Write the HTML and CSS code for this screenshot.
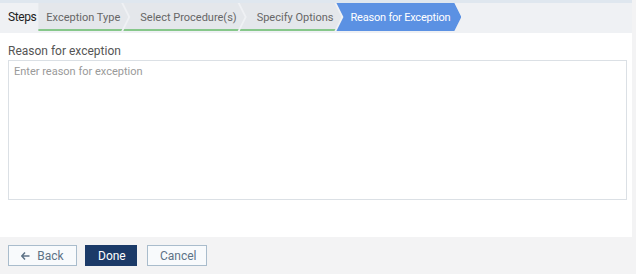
FILE: index.html
```html
<!DOCTYPE html>
<html lang="en">
<head>
  <meta charset="UTF-8">
  <title>Exception Wizard</title>
  <link rel="stylesheet" href="styles.css">
</head>
<body>
  <div class="page">
    <div class="steps">
      <span class="steps-title">Steps</span>
      <div class="step done first">Exception Type</div>
      <div class="step done">Select Procedure(s)</div>
      <div class="step done">Specify Options</div>
      <div class="step active">Reason for Exception</div>
    </div>

    <div class="content">
      <label class="field-label" for="reason">Reason for exception</label>
      <textarea id="reason" class="reason" placeholder="Enter reason for exception"></textarea>
    </div>

    <div class="footer">
      <button class="btn btn-light btn-back">
        <svg class="arrow" width="9" height="8" viewBox="0 0 9 8"><path d="M4 0.5 L0.8 4 L4 7.5 M1 4 H8.5" fill="none" stroke="currentColor" stroke-width="1.5"/></svg>
        Back
      </button>
      <button class="btn btn-primary">Done</button>
      <button class="btn btn-light btn-cancel">Cancel</button>
    </div>
  </div>
</body>
</html>
```

FILE: styles.css
```css
html, body {
  height: 100%;
}
body {
  margin: 0;
  background: #f3f3f4;
  font-family: Roboto, "Liberation Sans", sans-serif;
  color: #333;
}
.page {
  display: flex;
  flex-direction: column;
  height: 100%;
  border-top: 3px solid #dfe7ef;
  box-sizing: border-box;
  margin-right: 4px;
}
.steps {
  display: flex;
  align-items: stretch;
  height: 28px;
  padding-bottom: 2px;
  background: #eff1f4;
}
.steps-title {
  display: flex;
  align-items: center;
  padding: 0 2px 0 8px;
  font-size: 12px;
  color: #222;
  letter-spacing: -0.4px;
}
.step {
  display: flex;
  align-items: center;
  font-size: 11px;
  color: #666;
  background: #e4e7eb;
  padding: 0 8px 0 17px;
  margin-left: -5px;
  box-shadow: inset 0 -2px 0 #86c78a;
  clip-path: polygon(0 0, calc(100% - 7px) 0, 100% 50%, calc(100% - 7px) 100%, 0 100%, 7px 50%);
}
.step.first {
  margin-left: 0;
  padding-left: 8px;
  clip-path: polygon(0 0, calc(100% - 7px) 0, 100% 50%, calc(100% - 7px) 100%, 0 100%);
}
.step.active {
  background: #5b91e3;
  color: #fff;
  box-shadow: none;
  padding-left: 14px;
  padding-right: 11px;
  letter-spacing: -0.2px;
}
.content {
  flex: 1;
  background: #fff;
  padding: 11px 5px 0 8px;
  display: flex;
  flex-direction: column;
}
.field-label {
  font-size: 12px;
  color: #555;
  margin-bottom: 2px;
}
.reason {
  height: 140px;
  box-sizing: border-box;
  resize: none;
  border: 1px solid #dbe0e5;
  padding: 4px 5px;
  font-family: inherit;
  font-size: 11px;
  color: #333;
}
.reason::placeholder {
  color: #9a9a9a;
}
.footer {
  display: flex;
  gap: 8px;
  height: 37px;
  padding: 8px 8px 0;
  box-sizing: border-box;
  align-items: flex-start;
}
.btn {
  height: 21px;
  font-family: inherit;
  font-size: 12px;
  padding: 0 12px;
  cursor: pointer;
}
.btn-light {
  background: #f8fafc;
  border: 1px solid #a9bccc;
  color: #5d7286;
}
.btn-back {
  width: 69px;
  display: flex;
  align-items: center;
  justify-content: center;
  gap: 7px;
}
.btn-cancel {
  width: 60px;
  margin-left: 2px;
}
.btn-primary {
  background: #1b3a68;
  border: 1px solid #1b3a68;
  color: #fff;
  width: 52px;
}
.arrow {
  display: block;
}
```
